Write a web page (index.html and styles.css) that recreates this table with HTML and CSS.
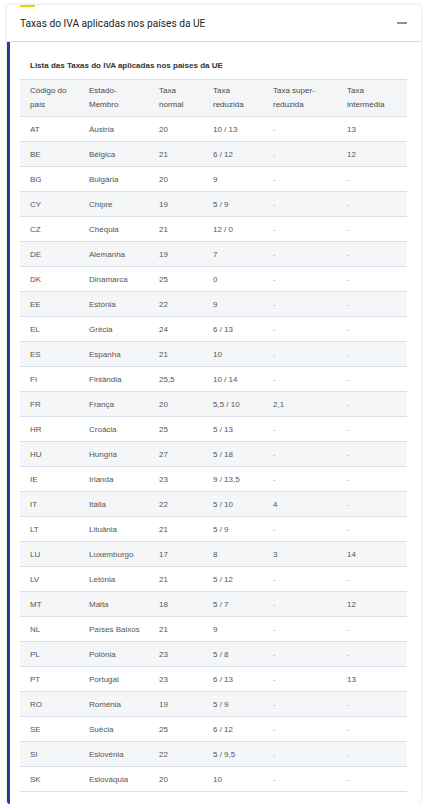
FILE: index.html
```html
<!DOCTYPE html>
<html lang="pt">
<head>
<meta charset="utf-8">
<link rel="stylesheet" href="styles.css">
</head>
<body>
<section class="card">
  <header class="card-head">
    <span class="accent"></span>
    <h2 class="title">Taxas do IVA aplicadas nos países da UE</h2>
    <span class="toggle"></span>
  </header>
  <div class="card-body">
    <table class="vat">
      <caption>Lista das Taxas do IVA aplicadas nos países da UE</caption>
      <thead>
        <tr><th class="c1">Código do<br>país</th><th class="c2">Estado-<br>Membro</th><th class="c3">Taxa<br>normal</th><th class="c4">Taxa<br>reduzida</th><th class="c5">Taxa super-<br>reduzida</th><th class="c6">Taxa<br>intermédia</th></tr>
      </thead>
      <tbody>
        <tr><td>AT</td><td>Áustria</td><td>20</td><td>10 / 13</td><td class="d">-</td><td>13</td></tr>
        <tr><td>BE</td><td>Bélgica</td><td>21</td><td>6 / 12</td><td class="d">-</td><td>12</td></tr>
        <tr><td>BG</td><td>Bulgária</td><td>20</td><td>9</td><td class="d">-</td><td class="d">-</td></tr>
        <tr><td>CY</td><td>Chipre</td><td>19</td><td>5 / 9</td><td class="d">-</td><td class="d">-</td></tr>
        <tr><td>CZ</td><td>Chéquia</td><td>21</td><td>12 / 0</td><td class="d">-</td><td class="d">-</td></tr>
        <tr><td>DE</td><td>Alemanha</td><td>19</td><td>7</td><td class="d">-</td><td class="d">-</td></tr>
        <tr><td>DK</td><td>Dinamarca</td><td>25</td><td>0</td><td class="d">-</td><td class="d">-</td></tr>
        <tr><td>EE</td><td>Estónia</td><td>22</td><td>9</td><td class="d">-</td><td class="d">-</td></tr>
        <tr><td>EL</td><td>Grécia</td><td>24</td><td>6 / 13</td><td class="d">-</td><td class="d">-</td></tr>
        <tr><td>ES</td><td>Espanha</td><td>21</td><td>10</td><td class="d">-</td><td class="d">-</td></tr>
        <tr><td>FI</td><td>Finlândia</td><td>25,5</td><td>10 / 14</td><td class="d">-</td><td class="d">-</td></tr>
        <tr><td>FR</td><td>França</td><td>20</td><td>5,5 / 10</td><td>2,1</td><td class="d">-</td></tr>
        <tr><td>HR</td><td>Croácia</td><td>25</td><td>5 / 13</td><td class="d">-</td><td class="d">-</td></tr>
        <tr><td>HU</td><td>Hungria</td><td>27</td><td>5 / 18</td><td class="d">-</td><td class="d">-</td></tr>
        <tr><td>IE</td><td>Irlanda</td><td>23</td><td>9 / 13,5</td><td class="d">-</td><td class="d">-</td></tr>
        <tr><td>IT</td><td>Itália</td><td>22</td><td>5 / 10</td><td>4</td><td class="d">-</td></tr>
        <tr><td>LT</td><td>Lituânia</td><td>21</td><td>5 / 9</td><td class="d">-</td><td class="d">-</td></tr>
        <tr><td>LU</td><td>Luxemburgo</td><td>17</td><td>8</td><td>3</td><td>14</td></tr>
        <tr><td>LV</td><td>Letónia</td><td>21</td><td>5 / 12</td><td class="d">-</td><td class="d">-</td></tr>
        <tr><td>MT</td><td>Malta</td><td>18</td><td>5 / 7</td><td class="d">-</td><td>12</td></tr>
        <tr><td>NL</td><td>Países Baixos</td><td>21</td><td>9</td><td class="d">-</td><td class="d">-</td></tr>
        <tr><td>PL</td><td>Polónia</td><td>23</td><td>5 / 8</td><td class="d">-</td><td class="d">-</td></tr>
        <tr><td>PT</td><td>Portugal</td><td>23</td><td>6 / 13</td><td class="d">-</td><td>13</td></tr>
        <tr><td>RO</td><td>Roménia</td><td>19</td><td>5 / 9</td><td class="d">-</td><td class="d">-</td></tr>
        <tr><td>SE</td><td>Suécia</td><td>25</td><td>6 / 12</td><td class="d">-</td><td class="d">-</td></tr>
        <tr><td>SI</td><td>Eslovénia</td><td>22</td><td>5 / 9,5</td><td class="d">-</td><td class="d">-</td></tr>
        <tr><td>SK</td><td>Eslováquia</td><td>20</td><td>10</td><td class="d">-</td><td class="d">-</td></tr>
      </tbody>
    </table>
  </div>
</section>
</body>
</html>
```
FILE: styles.css
```css
html, body {
  margin: 0;
  padding: 0;
  background: #ffffff;
}
body {
  padding: 5px 7px 0 7px;
  font-family: "Liberation Sans", Arial, sans-serif;
  color: #555;
}
.card {
  background: #fff;
  border-radius: 4px;
  box-shadow: 0 0 3px rgba(0, 0, 0, 0.18);
}
.card-head {
  position: relative;
  height: 37px;
  display: flex;
  align-items: center;
  justify-content: space-between;
  padding: 0 14px 0 13px;
  border-bottom: 1px solid #d6dbe6;
  box-sizing: border-box;
}
.accent {
  position: absolute;
  left: 13px;
  top: 0;
  width: 15px;
  height: 2px;
  background: #f2cd00;
}
.title {
  margin: 0;
  font-family: Roboto, "Liberation Sans", sans-serif;
  font-weight: 400;
  font-size: 10.2px;
  color: #222;
}
.toggle {
  width: 10px;
  height: 2px;
  background: #8593b5;
}
.card-body {
  border-left: 3px solid #1d3f95;
  border-bottom-left-radius: 3px;
  padding: 0 14px 12px 10px;
}
.vat {
  width: 100%;
  border-collapse: collapse;
  font-size: 8px;
  table-layout: fixed;
}
.vat caption {
  text-align: left;
  font-weight: 700;
  font-size: 8px;
  color: #333;
  padding: 19px 0 9px 10px;
}
.vat th {
  text-align: left;
  font-weight: 400;
  color: #4a4a4a;
  background: #f3f5f7;
  border-top: 1px solid #d9dfe8;
  border-bottom: 1px solid #d9dfe8;
  line-height: 14px;
  padding: 4px 4px 4px 10px;
  height: 27px;
  vertical-align: middle;
}
.c1 { width: 45px; }
.c2 { width: 56px; }
.c3 { width: 40px; }
.c4 { width: 46px; }
.c5 { width: 60px; }
.c6 { width: 56px; }
.vat td {
  padding: 0 4px 0 10px;
  height: 24px;
  border-bottom: 1px solid #d9dfe8;
  color: #555;
  white-space: nowrap;
}
.vat td.d {
  color: #b0b0b0;
}
.vat tbody tr:nth-child(even) td {
  background: #f5f6f8;
}
```
